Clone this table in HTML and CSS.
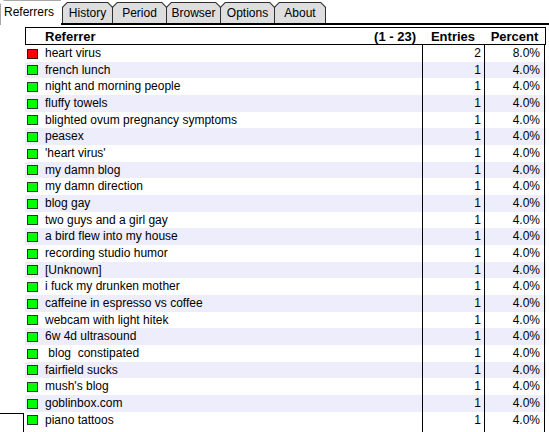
FILE: index.html
```html
<!DOCTYPE html>
<html>
<head>
<meta charset="utf-8">
<link rel="stylesheet" href="styles.css">
</head>
<body>
<div class="tabbar">
  <div class="tab active">Referrers</div>
  <div class="tab w-history"><span class="tab-in">History</span></div>
  <div class="tab w-period"><span class="tab-in">Period</span></div>
  <div class="tab w-browser"><span class="tab-in">Browser</span></div>
  <div class="tab w-options"><span class="tab-in">Options</span></div>
  <div class="tab w-about"><span class="tab-in">About</span></div>
</div>
<div class="report">
  <div class="head">
    <div class="h-ref">Referrer</div>
    <div class="h-range">(1 - 23)</div>
    <div class="h-num h-entries">Entries</div>
    <div class="h-num h-percent">Percent</div>
  </div>
  <div class="rows">
    <div class="row"><div class="c-ref"><span class="sq red"></span>heart virus</div><div class="c-num">2</div><div class="c-pct">8.0%</div></div>
    <div class="row"><div class="c-ref"><span class="sq"></span>french lunch</div><div class="c-num">1</div><div class="c-pct">4.0%</div></div>
    <div class="row"><div class="c-ref"><span class="sq"></span>night and morning people</div><div class="c-num">1</div><div class="c-pct">4.0%</div></div>
    <div class="row"><div class="c-ref"><span class="sq"></span>fluffy towels</div><div class="c-num">1</div><div class="c-pct">4.0%</div></div>
    <div class="row"><div class="c-ref"><span class="sq"></span>blighted ovum pregnancy symptoms</div><div class="c-num">1</div><div class="c-pct">4.0%</div></div>
    <div class="row"><div class="c-ref"><span class="sq"></span>peasex</div><div class="c-num">1</div><div class="c-pct">4.0%</div></div>
    <div class="row"><div class="c-ref"><span class="sq"></span>'heart virus'</div><div class="c-num">1</div><div class="c-pct">4.0%</div></div>
    <div class="row"><div class="c-ref"><span class="sq"></span>my damn blog</div><div class="c-num">1</div><div class="c-pct">4.0%</div></div>
    <div class="row"><div class="c-ref"><span class="sq"></span>my damn direction</div><div class="c-num">1</div><div class="c-pct">4.0%</div></div>
    <div class="row"><div class="c-ref"><span class="sq"></span>blog gay</div><div class="c-num">1</div><div class="c-pct">4.0%</div></div>
    <div class="row"><div class="c-ref"><span class="sq"></span>two guys and a girl gay</div><div class="c-num">1</div><div class="c-pct">4.0%</div></div>
    <div class="row"><div class="c-ref"><span class="sq"></span>a bird flew into my house</div><div class="c-num">1</div><div class="c-pct">4.0%</div></div>
    <div class="row"><div class="c-ref"><span class="sq"></span>recording studio humor</div><div class="c-num">1</div><div class="c-pct">4.0%</div></div>
    <div class="row"><div class="c-ref"><span class="sq"></span>[Unknown]</div><div class="c-num">1</div><div class="c-pct">4.0%</div></div>
    <div class="row"><div class="c-ref"><span class="sq"></span>i fuck my drunken mother</div><div class="c-num">1</div><div class="c-pct">4.0%</div></div>
    <div class="row"><div class="c-ref"><span class="sq"></span>caffeine in espresso vs coffee</div><div class="c-num">1</div><div class="c-pct">4.0%</div></div>
    <div class="row"><div class="c-ref"><span class="sq"></span>webcam with light hitek</div><div class="c-num">1</div><div class="c-pct">4.0%</div></div>
    <div class="row"><div class="c-ref"><span class="sq"></span>6w 4d ultrasound</div><div class="c-num">1</div><div class="c-pct">4.0%</div></div>
    <div class="row"><div class="c-ref"><span class="sq"></span> blog  constipated</div><div class="c-num">1</div><div class="c-pct">4.0%</div></div>
    <div class="row"><div class="c-ref"><span class="sq"></span>fairfield sucks</div><div class="c-num">1</div><div class="c-pct">4.0%</div></div>
    <div class="row"><div class="c-ref"><span class="sq"></span>mush's blog</div><div class="c-num">1</div><div class="c-pct">4.0%</div></div>
    <div class="row"><div class="c-ref"><span class="sq"></span>goblinbox.com</div><div class="c-num">1</div><div class="c-pct">4.0%</div></div>
    <div class="row"><div class="c-ref"><span class="sq"></span>piano tattoos</div><div class="c-num">1</div><div class="c-pct">4.0%</div></div>
    <div class="row filler"><div class="c-ref"></div><div class="c-num"></div><div class="c-pct"></div></div>
  </div>
</div>
<div class="frame-corner"></div>
</body>
</html>
```

FILE: styles.css
```css
html, body {
  margin: 0;
  padding: 0;
  background: #fff;
  overflow: hidden;
}
body {
  width: 549px;
  height: 432px;
  position: relative;
  font-family: "Liberation Sans", Arial, sans-serif;
  font-size: 12px;
  color: #000;
}
.tabbar {
  display: flex;
  align-items: flex-end;
  height: 23px;
  border-bottom: 2px solid #000;
}
.tab {
  box-sizing: border-box;
  height: 21px;
  background: #303030;
  padding: 1px 1px 0;
  margin-right: -1px;
  clip-path: polygon(5px 0, calc(100% - 5px) 0, 100% 5px, 100% 100%, 0 100%, 0 5px);
}
.tab-in {
  display: block;
  height: 20px;
  line-height: 20px;
  text-align: center;
  background: #dedede;
  clip-path: polygon(4.5px 0, calc(100% - 4.5px) 0, 100% 4.5px, 100% 100%, 0 100%, 0 4.5px);
}
.tab.active {
  width: 61px;
  height: 25px;
  margin-bottom: -2px;
  margin-right: 1px;
  background: #fff;
  border-left: 1px solid #a8a8a8;
  border-top: 1px solid #a8a8a8;
  padding: 0 0 0 3px;
  line-height: 22px;
  position: relative;
  z-index: 1;
  clip-path: polygon(4px 0, 100% 0, 100% 100%, 0 100%, 0 4px);
}
.w-history { width: 51px; }
.w-period { width: 55px; }
.w-browser { width: 55px; }
.w-options { width: 55px; }
.w-about { width: 52px; }

.report {
  margin: 2px 0 0 25px;
  width: 521px;
}
.head {
  box-sizing: border-box;
  height: 18px;
  border: 1px solid #000;
  display: grid;
  grid-template-columns: 19px 377px 62px 61px;
  align-items: center;
  font-weight: bold;
  font-size: 13px;
}
.h-ref { grid-column: 2; grid-row: 1; }
.h-range { grid-column: 2; grid-row: 1; text-align: right; padding-right: 6px; }
.h-entries { grid-column: 3; grid-row: 1; }
.h-percent { grid-column: 4; grid-row: 1; }
.h-num { text-align: center; }

.row {
  display: grid;
  grid-template-columns: 397px 62px 61px;
  height: 16.68px;
  line-height: 17px;
}
.row:nth-child(even) { background: #ededfc; }
.row.filler { background: transparent; height: 20px; }
.c-ref {
  white-space: pre;
  display: flex;
  align-items: center;
}
.c-num {
  border-left: 1px solid #000;
  text-align: right;
  padding-right: 3px;
}
.c-pct {
  border-left: 1px solid #000;
  border-right: 1px solid #000;
  text-align: right;
  padding-right: 4px;
}
.sq {
  box-sizing: border-box;
  width: 11px;
  height: 10px;
  margin: 0 7px 0 2px;
  background: #00ff00;
  border: 1px solid #204020;
}
.sq.red { background: #ff0000; border-color: #401010; }

.frame-corner {
  position: absolute;
  left: 0;
  top: 413px;
  width: 23px;
  height: 30px;
  border-top: 1px solid #000;
  border-right: 1px solid #000;
}
```
